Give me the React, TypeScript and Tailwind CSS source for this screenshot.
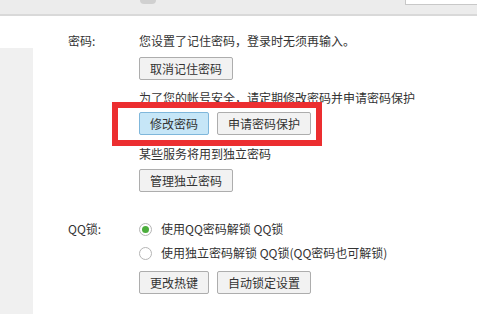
import type { ReactNode } from 'react'

const font = { fontFamily: '"Noto Sans CJK SC", "Noto Sans", sans-serif' }

function Btn({ children, active = false }: { children: ReactNode; active?: boolean }) {
  return (
    <button
      className={
        'h-[23px] px-[10px] border text-[12px] leading-none text-[#333] rounded-[2px] ' +
        (active ? 'bg-[#c6e6f7] border-[#7fb7db]' : 'bg-[#f2f2f2] border-[#adadad]')
      }
    >
      {children}
    </button>
  )
}

function Radio({ checked, label }: { checked?: boolean; label: string }) {
  return (
    <div className="flex items-center h-5 gap-[9px]">
      <span className="w-[13px] h-[13px] rounded-full border border-[#b5b5b5] bg-white flex items-center justify-center">
        {checked && <span className="w-[7px] h-[7px] rounded-full bg-[#4cae3c]" />}
      </span>
      <span>{label}</span>
    </div>
  )
}

export default function App() {
  return (
    <div className="w-[477px] h-[314px] bg-white relative overflow-hidden text-[12px] text-[#333]" style={font}>
      {/* top strip */}
      <div className="h-[16px] bg-[#ececec] border-b-2 border-[#d9d9d9] relative">
        <div className="absolute left-[140px] top-0 w-[16px] h-[4px] bg-[#d0d0d0] rounded-b-sm" />
        <div className="absolute left-[405px] top-[-1px] w-[80px] h-[6px] bg-white border border-[#c8c8c8]" />
      </div>

      <div className="flex">
        <div className="w-[33px] mt-[32px] h-[270px] bg-[#f0f0f0]" />
        <div className="flex-1 pl-[35px] pt-[15px]">
          {/* password */}
          <div className="flex">
            <div className="w-[71px] h-5 leading-5">密码:</div>
            <div className="flex flex-col">
              <div className="h-5 leading-5">您设置了记住密码，登录时无须再输入。</div>
              <div className="mt-[6px]"><Btn>取消记住密码</Btn></div>
              <div className="h-5 leading-5 mt-[8px]">为了您的帐号安全，请定期修改密码并申请密码保护</div>
              <div className="mt-[4px] flex gap-[8px]">
                <Btn active>修改密码</Btn>
                <Btn>申请密码保护</Btn>
              </div>
              <div className="h-5 leading-5 mt-[9px]">某些服务将用到独立密码</div>
              <div className="mt-[5px]"><Btn>管理独立密码</Btn></div>
            </div>
          </div>

          {/* QQ lock */}
          <div className="flex mt-[27px]">
            <div className="w-[71px] h-5 leading-5">QQ锁:</div>
            <div className="flex flex-col">
              <Radio checked label="使用QQ密码解锁 QQ锁" />
              <div className="mt-[4px]"><Radio label="使用独立密码解锁 QQ锁(QQ密码也可解锁)" /></div>
              <div className="mt-[8px] flex gap-[8px]">
                <Btn>更改热键</Btn>
                <Btn>自动锁定设置</Btn>
              </div>
            </div>
          </div>
        </div>
      </div>

      {/* highlight box */}
      <div className="absolute left-[112px] top-[102px] w-[210px] h-[44px] border-[6px] border-[#ec2e30]" />
    </div>
  )
}
